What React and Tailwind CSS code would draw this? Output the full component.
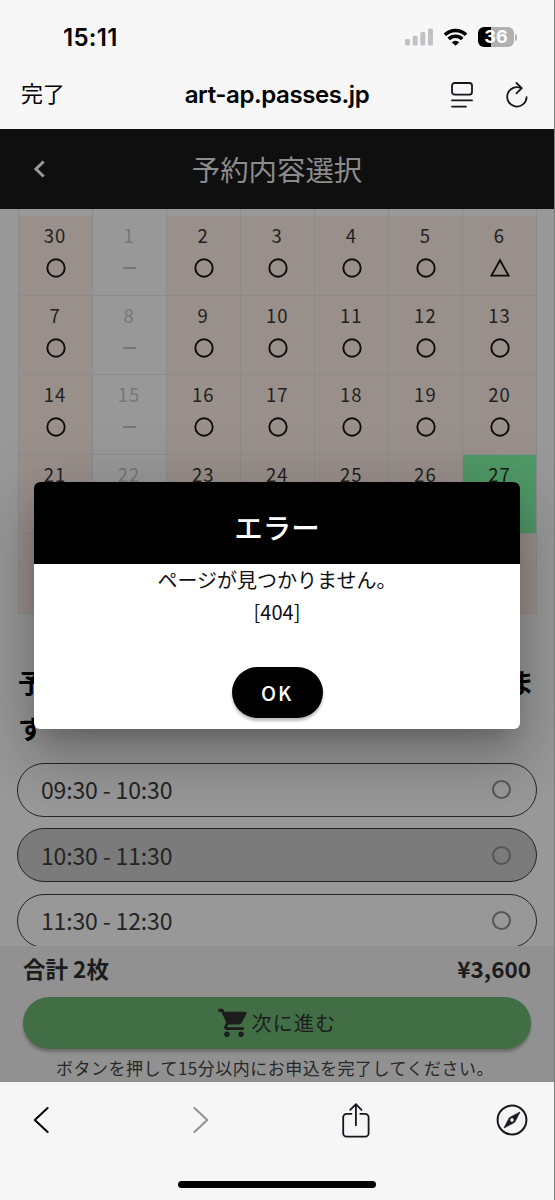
import { MdShoppingCart } from 'react-icons/md';

const weeks = [
  [30, 1, 2, 3, 4, 5, 6],
  [7, 8, 9, 10, 11, 12, 13],
  [14, 15, 16, 17, 18, 19, 20],
  [21, 22, 23, 24, 25, 26, 27],
  ['', '', '', '', '', '', ''],
];

const slots = [
  { time: '09:30 - 10:30', full: false },
  { time: '10:30 - 11:30', full: true },
  { time: '11:30 - 12:30', full: false },
];

function StatusBar() {
  return (
    <div className="flex h-[60px] items-center justify-between pt-[14px] pr-[37px] pl-[63px]">
      <span className="pt-[2px] font-['Inter','Liberation_Sans',sans-serif] text-[24px] leading-none font-semibold tracking-[0.3px]">
        15:11
      </span>
      <div className="flex items-center">
        <svg width="28" height="18" viewBox="0 0 28 18" fill="#c2c2c4">
          <rect x="0" y="11" width="5" height="6.5" rx="1.5" />
          <rect x="7.7" y="7.7" width="5" height="9.8" rx="1.5" />
          <rect x="15.3" y="4" width="5" height="13.5" rx="1.5" />
          <rect x="23" y="0.4" width="5" height="17.1" rx="1.5" />
        </svg>
        <svg className="ml-[10px]" width="25" height="18" viewBox="0 0 25 18" fill="none" stroke="#000" strokeWidth="3.5">
          <path d="M1.9 6.8a15.2 15.2 0 0 1 21.2 0" />
          <path d="M5.7 11a9.7 9.7 0 0 1 13.6 0" />
          <path d="M12.5 17.8 8.8 14.2a5.3 5.3 0 0 1 7.4 0z" fill="#000" stroke="none" />
        </svg>
        <div className="ml-[10px] flex h-[20px] w-[36px] items-center justify-center rounded-[6px] bg-linear-to-r from-black from-36% to-[#b0b0b2] to-36%">
          <span className="font-['Inter','Liberation_Sans',sans-serif] text-[18px] leading-none font-bold text-white">
            36
          </span>
        </div>
        <span className="ml-[1px] h-[7px] w-[2px] rounded-r-full bg-[#b0b0b2]" />
      </div>
    </div>
  );
}

function AddressBar() {
  return (
    <div className="flex h-[69px] items-center pr-[26px] pl-[21px]">
      <span className="w-[109px] pb-[5px] text-[22px] leading-none tracking-[-0.3px]">完了</span>
      <span className="flex-1 text-center font-['Inter','Liberation_Sans',sans-serif] text-[24px] leading-none font-semibold tracking-[-0.4px] whitespace-nowrap">
        art-ap.passes.jp
      </span>
      <div className="flex w-[104px] items-center justify-end gap-[33px]">
        <svg width="22" height="26" viewBox="0 0 22 26" fill="none" stroke="#16161e" strokeWidth="1.8" strokeLinecap="round">
          <rect x="1" y="1" width="20" height="11.6" rx="2.6" />
          <path d="M1 18.4h20M1 24.6h14" />
        </svg>
        <svg width="22" height="26" viewBox="0 0 22 26" fill="none" stroke="#16161e" strokeWidth="1.8" strokeLinecap="round" strokeLinejoin="round">
          <path d="M15.3 6.2A9.7 9.7 0 1 0 20.6 15.2" />
          <path d="M10.5 1l5.2 5.2-5.2 5.2" />
        </svg>
      </div>
    </div>
  );
}

function DayMark({ day, closed }) {
  if (closed) {
    return <span className="h-[2px] w-[13px] bg-[#777]" />;
  }
  return (
    <svg width="20" height="20" viewBox="0 0 20 20" fill="none" stroke="#0f0c0b" strokeWidth="1.9">
      {day === 6 ? <path d="M10 2.2 18.6 17.6H1.4z" /> : <circle cx="10" cy="10" r="8.7" />}
    </svg>
  );
}

function dayColor(day, col) {
  if (col === 1) return 'bg-[#989898] text-[#777]';
  if (day === 27) return 'bg-[#509966] text-[#1b1a1a]';
  return 'bg-[#998f8b] text-[#221f1e]';
}

function Calendar() {
  return (
    <div className="mr-[17px] ml-[17.5px] border-l border-[#8a8b8c]">
      <div className="grid h-[7px] grid-cols-7">
        {weeks[0].map((day) => (
          <div key={day} className="border-r border-[#8a8b8c]" />
        ))}
      </div>
      {weeks.map((week, row) => (
        <div key={row} className="grid h-[79.5px] grid-cols-7">
          {week.map((day, col) => (
            <div
              key={col}
              className={`flex flex-col items-center border-r border-b border-[#8a8b8c] pt-[9px] ${dayColor(day, col)}`}
            >
              <span className="h-[20px] text-[18.5px] leading-[20px] tracking-[1px]">{day}</span>
              {day !== '' && (
                <span className="mt-[13px] flex h-[20px] items-center pl-[1px]">
                  <DayMark day={day} closed={col === 1} />
                </span>
              )}
            </div>
          ))}
        </div>
      ))}
    </div>
  );
}

function TimeSlots() {
  return (
    <div className="flex flex-col gap-[11.5px] px-[17px]">
      {slots.map((slot) => (
        <div
          key={slot.time}
          className={`flex h-[54px] shrink-0 items-center justify-between rounded-full border-[1.5px] border-[#242424] pr-[25px] pl-[23px] ${slot.full ? 'bg-[#7b7b7b]' : ''}`}
        >
          <span className="text-[23px] leading-none tracking-[-0.15px] text-[#242424]">{slot.time}</span>
          <span className="h-[19px] w-[19px] rounded-full border-2 border-[#565656]" />
        </div>
      ))}
    </div>
  );
}

function CheckoutBar() {
  return (
    <div className="flex h-[136px] flex-col bg-[#919191] px-[23px] text-[#1c1c1c]">
      <div className="flex h-[51px] items-center justify-between pb-[7px] text-[22.5px] leading-none font-bold">
        <span>合計 2枚</span>
        <span>¥3,600</span>
      </div>
      <button
        type="button"
        className="flex h-[52px] w-full items-center justify-center rounded-full bg-[#426e46] text-[20px] tracking-[1.3px] shadow-[0_3px_3px_rgba(0,0,0,0.25)]"
      >
        <MdShoppingCart size={34} />
        次に進む
      </button>
      <p className="mt-[9px] pr-[4px] text-center text-[17px] leading-[20px] tracking-[0.48px] whitespace-nowrap text-[#282828]">
        ボタンを押して15分以内にお申込を完了してください。
      </p>
    </div>
  );
}

function ErrorDialog() {
  return (
    <div className="absolute top-[482px] left-[34px] h-[247px] w-[486px] overflow-hidden rounded-[6px] bg-white text-center shadow-[0_15px_21px_-10px_rgba(0,0,0,0.2),0_34px_53px_4px_rgba(0,0,0,0.14),0_13px_64px_11px_rgba(0,0,0,0.12)]">
      <h2 className="flex h-[82px] items-center justify-center bg-black pt-[8px] text-[28.5px] leading-none font-medium text-white">
        エラー
      </h2>
      <p className="text-[20px] leading-[32px] text-[#111]">
        ページが見つかりません。
        <br />
        [404]
      </p>
      <button
        type="button"
        className="mt-[39px] h-[51px] w-[91px] rounded-full bg-black text-[20px] font-medium tracking-[1.8px] text-white shadow-[0_3px_3px_rgba(0,0,0,0.25)]"
      >
        OK
      </button>
    </div>
  );
}

function BrowserToolbar() {
  return (
    <div className="flex h-[118px] flex-col bg-[#f6f6f6]">
      <div className="flex h-[76px] items-center pl-[33px]">
        <svg width="16" height="26" viewBox="0 0 16 26" fill="none" stroke="#000" strokeWidth="2" strokeLinecap="round" strokeLinejoin="round">
          <path d="M14.6 1 1.8 13l12.8 12" />
        </svg>
        <svg className="ml-[144px]" width="16" height="26" viewBox="0 0 16 26" fill="none" stroke="#929294" strokeWidth="2" strokeLinecap="round" strokeLinejoin="round">
          <path d="M1.4 1l12.8 12L1.4 25" />
        </svg>
        <svg className="ml-[133px]" width="28" height="35" viewBox="0 0 28 35" fill="none" stroke="#16161e" strokeWidth="1.8" strokeLinecap="round" strokeLinejoin="round">
          <path d="M9.5 10.8H4.6A3.4 3.4 0 0 0 1.2 14.2v16a3.4 3.4 0 0 0 3.4 3.4h18.6a3.4 3.4 0 0 0 3.4-3.4v-16a3.4 3.4 0 0 0-3.4-3.4h-4.9" />
          <path d="M13.9 22.2V1.5M8.3 6.8 13.9 1.2l5.6 5.6" />
        </svg>
        <svg className="ml-[126px]" width="32" height="32" viewBox="0 0 32 32">
          <circle cx="16" cy="16" r="14.4" fill="none" stroke="#16161e" strokeWidth="2" />
          <path fill="#16161e" fillRule="evenodd" d="M23.9 8.1 18.7 18.2 8.1 23.9 13.3 13.8zM16 13.8a2.2 2.2 0 1 0 0 4.4 2.2 2.2 0 0 0 0-4.4z" stroke="#16161e" strokeWidth="0.8" strokeLinejoin="round" />
        </svg>
      </div>
      <div className="mx-auto mt-[23px] h-[7px] w-[198px] rounded-full bg-black" />
    </div>
  );
}

export default function App() {
  return (
    <div className="relative h-[1200px] w-[555px] overflow-hidden border-r border-[#7d7d7d] bg-[#989898] font-['Noto_Sans_CJK_JP',sans-serif]">
      <div className="h-[129px] bg-[#f7f7f7] text-black">
        <StatusBar />
        <AddressBar />
      </div>
      <header className="flex h-[80px] items-center bg-[#0f0f0f] text-[#8c8c8c]">
        <div className="w-[80px] pl-[34px]">
          <svg width="11" height="18" viewBox="0 0 11 18" fill="none" stroke="#999" strokeWidth="3">
            <path d="M9.7 1.5 2 9l7.7 7.5" />
          </svg>
        </div>
        <h1 className="flex-1 text-center text-[28.4px] leading-none font-normal">予約内容選択</h1>
        <div className="w-[80px]" />
      </header>
      <main className="h-[737px] overflow-hidden">
        <Calendar />
        <h2 className="mt-[45.5px] pr-[20px] pl-[18px] text-[26px] leading-[46px] font-bold text-black">
          <span className="flex justify-between">
            <span>予</span>
            <span>ま</span>
          </span>
          す
        </h2>
        <div className="mt-[11.5px]">
          <TimeSlots />
        </div>
      </main>
      <CheckoutBar />
      <BrowserToolbar />
      <ErrorDialog />
    </div>
  );
}
